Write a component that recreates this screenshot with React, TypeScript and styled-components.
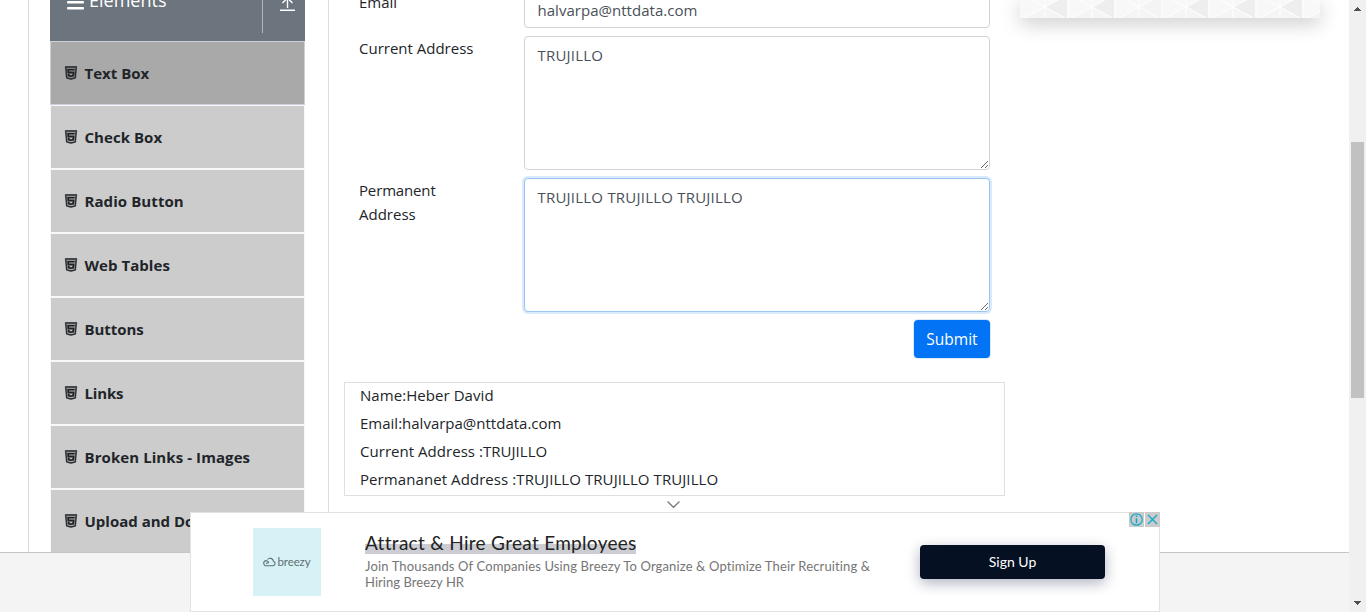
import React from "react";
import styled, { createGlobalStyle, css } from "styled-components";
import { AiOutlineHtml5 } from "react-icons/ai";

const Global = createGlobalStyle`
  * { box-sizing: border-box; }
  body { margin: 0; background: #fff; overflow: hidden; }
  p { margin: 0; }
`;

const Shell = styled.div`
  position: relative;
  display: flex;
  width: 1366px;
  height: 612px;
  overflow: hidden;
  font-family: "Open Sans", "Noto Sans", sans-serif;
  font-size: 15px;
  line-height: 24px;
  color: #212529;
`;

const Page = styled.div`
  width: 1349px;
  display: flex;
  flex-direction: column;
`;

const Main = styled.main`
  height: 552px;
  display: flex;
  align-items: stretch;
  padding-left: 28px;
  overflow: hidden;
`;

const Footer = styled.footer`
  flex: 1;
  background: #f4f4f4;
  border-top: 1px solid #c6c6c6;
`;

const Sidebar = styled.aside`
  width: 301px;
  flex: none;
  padding: 0 23px 0 21px;
  border-left: 1px solid #dcdcdf;
  border-right: 1px solid #dcdcdf;
`;

const GroupHeader = styled.div`
  height: 61px;
  margin-top: -20px;
  display: flex;
  background: #6c757d;
  color: #fff;
  font-size: 18px;
`;

const GroupTitle = styled.div`
  width: 213px;
  height: 53px;
  display: flex;
  align-items: flex-start;
  gap: 5px;
  padding: 8px 0 0 16px;
  border-right: 1px solid #b3b7bb;
  svg { margin-top: 4px; }
`;

const GroupToggle = styled.div`
  padding: 15px 0 0 16px;
  svg { display: block; }
`;

const MenuItem = styled.div<{ $active?: boolean }>`
  height: 64px;
  display: flex;
  align-items: center;
  gap: 5.5px;
  padding-left: 12px;
  border: 1px solid ${(p) => (p.$active ? "#ccd0da" : "#f8f8f8")};
  background: ${(p) => (p.$active ? "#a9a9a9" : "#cccccc")};
  font-weight: 700;
  svg { display: block; stroke: currentColor; stroke-width: 36px; }
`;

const T = styled.span<{ $ls?: number }>`
  letter-spacing: ${(p) => p.$ls ?? 0}px;
  white-space: nowrap;
`;

const Content = styled.section`
  width: 691px;
  padding: 0 15px;
`;

const FormRow = styled.div<{ $h: number; $top?: number }>`
  display: flex;
  height: ${(p) => p.$h}px;
  padding: 0 15px;
  margin-top: ${(p) => p.$top ?? 0}px;
  margin-bottom: 8px;
`;

const Label = styled.label`
  width: 165px;
  display: flex;
  flex-direction: column;
`;

const fieldStyle = css`
  display: block;
  width: 466px;
  height: 100%;
  margin: 0;
  padding: 6px 12.5px;
  border: 1px solid #ced4da;
  border-radius: 4px;
  outline: none;
  background: #fff;
  color: #495057;
  font: inherit;
`;

const Input = styled.input`
  ${fieldStyle}
  padding-top: 8px;
  letter-spacing: 0.03px;
`;

const TextArea = styled.textarea<{ $focus?: boolean }>`
  ${fieldStyle}
  letter-spacing: 0.22px;
  ${(p) => p.$focus && css`
    border-color: #9cc4f0;
    box-shadow: 0 0 0 2px #d9eafc;
  `}
`;

const Actions = styled.div`
  display: flex;
  justify-content: flex-end;
  padding: 0 15px;
`;

const Submit = styled.button`
  width: 76px;
  height: 38px;
  padding: 0;
  border: 0;
  border-radius: 4px;
  background: #0273f4;
  box-shadow: 0 0 0 1px #d9eafc;
  color: #fff;
  font: inherit;
  font-size: 15.5px;
`;

const Output = styled.div`
  width: 661px;
  height: 114px;
  margin-top: 24px;
  padding-left: 15px;
  border: 1px solid #dcdfe3;
  p { height: 24px; margin-bottom: 4px; }
`;

const Promo = styled.div`
  width: 300px;
  height: 18px;
  background: #f8f8f8;
  box-shadow: 0 5px 20px rgba(0, 0, 0, 0.22);
  svg { display: block; }
`;

const Scrollbar = styled.div`
  width: 17px;
  display: flex;
  flex-direction: column;
  align-items: center;
  justify-content: space-between;
  padding: 7px 0;
  background: #f0f0f0;
  svg { display: block; }
`;

const Thumb = styled.div`
  width: 13px;
  height: 256px;
  margin-bottom: 72px;
  background: #c1c1c1;
`;

const Ad = styled.div`
  position: absolute;
  left: 190px;
  top: 512px;
  width: 970px;
  height: 100px;
  display: flex;
  border: 1px solid #e2e2e2;
  background: #fff;
  font-family: Lato, sans-serif;
  font-variant-ligatures: none;
`;

const AdLogo = styled.div`
  width: 68px;
  height: 68px;
  margin: 15px 44px 0 62px;
  display: flex;
  align-items: center;
  justify-content: center;
  gap: 1px;
  background: #d7f2f6;
  color: #5c6e72;
  font: 11.5px/14px Lato, sans-serif;
`;

const AdCopy = styled.div`
  width: 555px;
  padding-top: 19px;
  color: #757575;
  font-size: 13px;
  line-height: 16px;
`;

const AdTitle = styled.div`
  width: 271px;
  height: 22px;
  margin-bottom: 4px;
  background: linear-gradient(#fff 55%, #cccdd3 55%);
  color: #222;
  font-size: 19px;
  line-height: 22px;
`;

const AdButton = styled.button`
  width: 185px;
  height: 34px;
  margin-top: 32px;
  padding: 0 0 2px;
  border: 0;
  border-radius: 4px;
  background: #051022;
  box-shadow: 0 4px 14px rgba(5, 16, 60, 0.32);
  color: #fff;
  font: 14px Lato, sans-serif;
`;

const AdBadges = styled.div`
  position: absolute;
  right: -1px;
  top: -1px;
  display: flex;
  gap: 1px;
`;

const Badge = styled.div`
  width: 15px;
  height: 15px;
  background: #cbcbcb;
  svg { display: block; }
`;

const Collapse = styled.div`
  position: absolute;
  left: 666px;
  top: 500px;
  svg { display: block; }
`;

const items: [string, number][] = [
  ["Text Box", 0],
  ["Check Box", 0.05],
  ["Radio Button", 0.08],
  ["Web Tables", 0.05],
  ["Buttons", -0.05],
  ["Links", -0.15],
  ["Broken Links - Images", 0.08],
  ["Upload and Download", 0],
];

const output: [string, number][] = [
  ["Name:Heber David", 0.06],
  ["Email:halvarpa@nttdata.com", 0],
  ["Current Address :TRUJILLO", 0.04],
  ["Permananet Address :TRUJILLO TRUJILLO TRUJILLO", 0.08],
];

const tiles = [0, 1, 2, 3, 4, 5, 6];

export default function App() {
  return (
    <Shell>
      <Global />
      <Page>
        <Main>
          <Sidebar>
            <GroupHeader>
              <GroupTitle>
                <svg width="18" height="18" viewBox="0 0 18 18" fill="#fff">
                  <rect x="1" y="3" width="17" height="2.5" rx="1" />
                  <rect x="1" y="9" width="17" height="2.5" rx="1" />
                  <rect x="1" y="15" width="17" height="2.5" rx="1" />
                </svg>
                <T>Elements</T>
              </GroupTitle>
              <GroupToggle>
                <svg width="17" height="17" viewBox="0 0 17 17" fill="none" stroke="#fff" strokeWidth="1.4">
                  <path d="M1 15.2h15M8.5 13V2M3.5 8l5-5 5 5" />
                </svg>
              </GroupToggle>
            </GroupHeader>
            {items.map(([name, ls], i) => (
              <MenuItem key={name} $active={i === 0}>
                <AiOutlineHtml5 size={16} />
                <T $ls={ls}>{name}</T>
              </MenuItem>
            ))}
          </Sidebar>
          <Content>
            <FormRow $h={38} $top={-10}>
              <Label><T>Email</T></Label>
              <Input defaultValue="halvarpa@nttdata.com" />
            </FormRow>
            <FormRow $h={134}>
              <Label><T>Current Address</T></Label>
              <TextArea defaultValue="TRUJILLO" />
            </FormRow>
            <FormRow $h={134}>
              <Label><T $ls={-0.15}>Permanent</T><T>Address</T></Label>
              <TextArea $focus defaultValue="TRUJILLO TRUJILLO TRUJILLO" />
            </FormRow>
            <Actions><Submit>Submit</Submit></Actions>
            <Output>
              {output.map(([line, ls]) => (
                <p key={line}><T $ls={ls}>{line}</T></p>
              ))}
            </Output>
          </Content>
          <Promo>
            <svg width="300" height="18" viewBox="0 0 300 18">
              {tiles.map((i) => (
                <g key={i} transform={`translate(${i * 47 + 1} 0)`}>
                  <path d="M24 7 46 -5V18H44Z" fill={i % 4 === 2 ? "#f4f4f4" : "#eeeeee"} />
                  <path d="M24 7 4 18H44Z" fill="#f5f5f5" />
                  <path d="M24 -2V18M4 18 44 -4M4 -4 44 18M47 0V18" stroke="#fdfdfd" strokeWidth="1.2" fill="none" />
                </g>
              ))}
            </svg>
          </Promo>
        </Main>
        <Footer />
      </Page>
      <Scrollbar>
        <svg width="7" height="4" viewBox="0 0 7 4" fill="#505050" shapeRendering="crispEdges">
          <path d="M3 0h1v1h1v1h1v1h1v1H0V3h1V2h1V1h1z" />
        </svg>
        <Thumb />
        <svg width="7" height="4" viewBox="0 0 7 4" fill="#505050" shapeRendering="crispEdges">
          <path d="M3 4h1V3h1V2h1V1h1V0H0v1h1v1h1v1h1z" />
        </svg>
      </Scrollbar>
      <Collapse>
        <svg width="15" height="9" viewBox="0 0 15 9" fill="none" stroke="#777" strokeWidth="1.2">
          <path d="M1.5 1.5 7.5 7.3l6-5.8" />
        </svg>
      </Collapse>
      <Ad>
        <AdLogo>
          <svg width="13" height="10" viewBox="0 0 13 10" fill="none" stroke="#5c6e72" strokeWidth="1.1">
            <path d="M6 5.5 3.2 3.6A2.6 2.6 0 0 0 3.4 8.8H10a2.3 2.3 0 0 0 .4-4.5A3.3 3.3 0 0 0 4.5 2.5M6 5.5 3 6.5" />
          </svg>
          <T $ls={-0.1}>breezy</T>
        </AdLogo>
        <AdCopy>
          <AdTitle><T $ls={0.3}>Attract &amp; Hire Great Employees</T></AdTitle>
          <p><T $ls={0.14}>Join Thousands Of Companies Using Breezy To Organize &amp; Optimize Their Recruiting &amp;</T></p>
          <p><T $ls={0.05}>Hiring Breezy HR</T></p>
        </AdCopy>
        <AdButton><T>Sign Up</T></AdButton>
        <AdBadges>
          <Badge>
            <svg width="15" height="15" viewBox="0 0 15 15" fill="none" stroke="#12aacb" strokeWidth="1.2">
              <circle cx="7.5" cy="7.5" r="5.7" />
              <path d="M7.5 3.5v1.6M7.5 6.3v5" strokeWidth="1.6" />
            </svg>
          </Badge>
          <Badge>
            <svg width="15" height="15" viewBox="0 0 15 15" stroke="#12aacb" strokeWidth="1.4">
              <path d="M3 3l9 9M12 3l-9 9" />
            </svg>
          </Badge>
        </AdBadges>
      </Ad>
    </Shell>
  );
}
